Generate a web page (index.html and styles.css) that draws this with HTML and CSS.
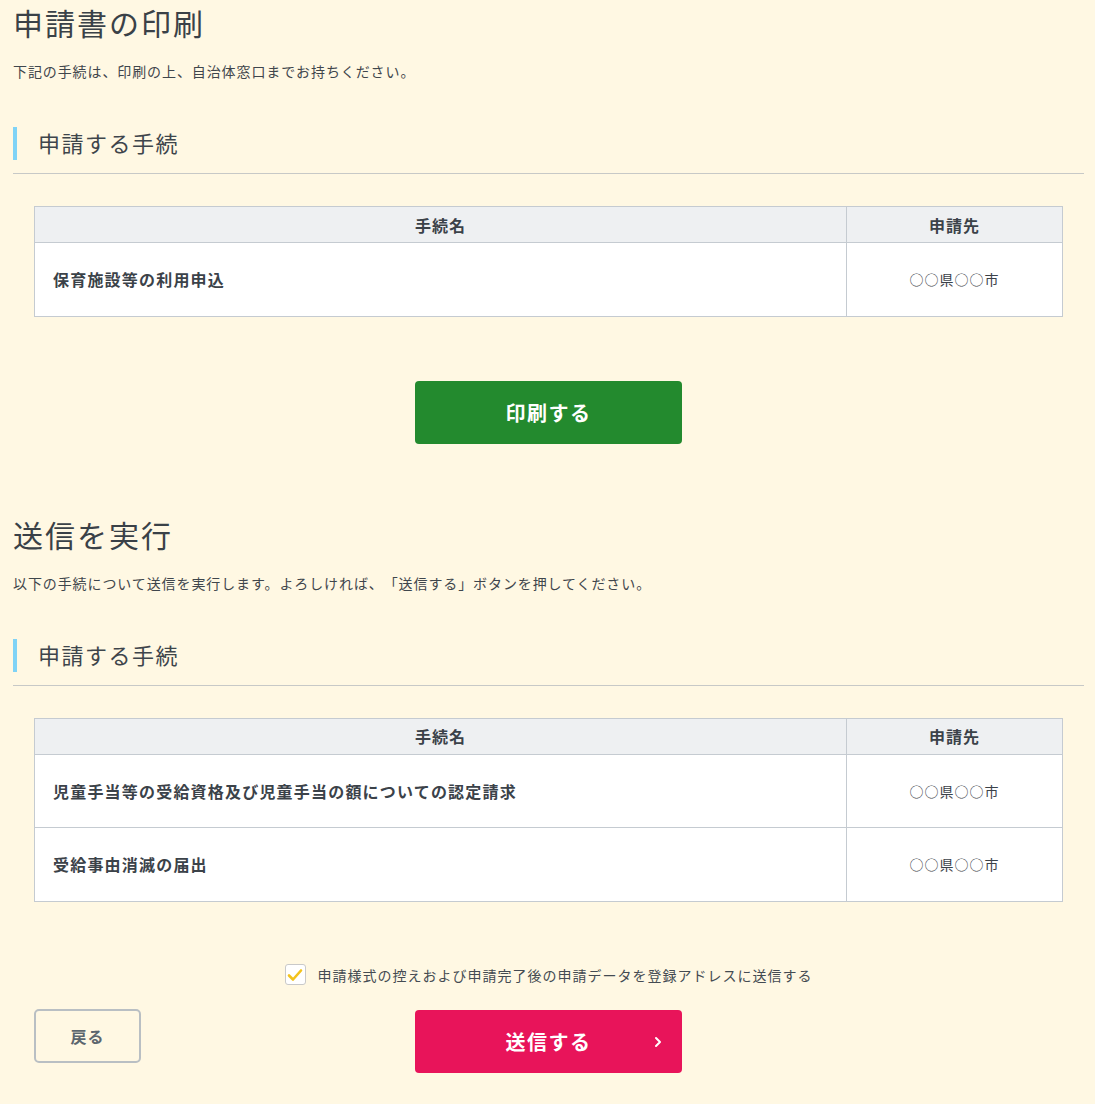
FILE: index.html
```html
<!DOCTYPE html>
<html lang="ja">
<head>
<meta charset="utf-8">
<title>申請書の印刷</title>
<link rel="stylesheet" href="styles.css">
</head>
<body>
<div class="page">
  <section class="block">
    <h1 class="title">申請書の印刷</h1>
    <p class="lead">下記の手続は、印刷の上、自治体窓口までお持ちください。</p>
    <div class="sec-head"><h2 class="sec-title">申請する手続</h2></div>
    <table class="proc">
      <thead>
        <tr><th class="c-name">手続名</th><th class="c-dest">申請先</th></tr>
      </thead>
      <tbody>
        <tr><td class="c-name">保育施設等の利用申込</td><td class="c-dest">○○県○○市</td></tr>
      </tbody>
    </table>
    <div class="center">
      <button class="btn btn-print" type="button">印刷する</button>
    </div>
  </section>

  <section class="block block2">
    <h1 class="title">送信を実行</h1>
    <p class="lead">以下の手続について送信を実行します。よろしければ、「送信する」ボタンを押してください。</p>
    <div class="sec-head"><h2 class="sec-title">申請する手続</h2></div>
    <table class="proc">
      <thead>
        <tr><th class="c-name">手続名</th><th class="c-dest">申請先</th></tr>
      </thead>
      <tbody>
        <tr><td class="c-name">児童手当等の受給資格及び児童手当の額についての認定請求</td><td class="c-dest">○○県○○市</td></tr>
        <tr><td class="c-name">受給事由消滅の届出</td><td class="c-dest">○○県○○市</td></tr>
      </tbody>
    </table>
    <label class="check">
      <span class="box"><svg width="16" height="14" viewBox="0 0 16 14"><polyline points="2,7.5 6,11.5 14,2.5" fill="none" stroke="#f3c31d" stroke-width="2.6" stroke-linecap="round" stroke-linejoin="round"/></svg></span>
      <span class="check-label">申請様式の控えおよび申請完了後の申請データを登録アドレスに送信する</span>
    </label>
    <div class="actions">
      <div class="act-left"><button class="btn-back" type="button">戻る</button></div>
      <button class="btn btn-send" type="button">送信する<svg class="chev" width="8" height="12" viewBox="0 0 8 12"><polyline points="2,2 6,6 2,10" fill="none" stroke="#fff" stroke-width="2" stroke-linecap="round" stroke-linejoin="round"/></svg></button>
      <div></div>
    </div>
  </section>
</div>
</body>
</html>
```
FILE: styles.css
```css
html, body {
  margin: 0;
  padding: 0;
  background: #fff8e3;
}
body {
  font-family: "Noto Sans CJK JP", "Noto Sans", sans-serif;
  color: #3b4249;
  text-spacing-trim: space-all;
}
.page {
  padding: 0 11px 0 13px;
}
.title {
  margin: 0;
  font-size: 30px;
  line-height: 45px;
  font-weight: 400;
  letter-spacing: 2px;
  color: #3a4147;
}
.lead {
  margin: 16px 0 0;
  font-size: 14px;
  line-height: 20px;
  letter-spacing: 0.9px;
  color: #3f464c;
}
.sec-head {
  margin-top: 46px;
  padding-bottom: 13px;
  border-bottom: 1px solid #c7c9c7;
}
.sec-title {
  margin: 0;
  border-left: 4px solid #7fd3f6;
  padding-left: 21px;
  font-size: 22px;
  line-height: 30px;
  height: 33px;
  font-weight: 400;
  letter-spacing: 1.5px;
  color: #3e454b;
}
.proc {
  margin: 32px 21px 0;
  width: calc(100% - 42px);
  border-collapse: collapse;
  background: #fff;
}
.proc th, .proc td {
  border: 1px solid #c5cbd1;
}
.proc th {
  background: #eef0f2;
  height: 35px;
  padding: 0;
  font-size: 16px;
  font-weight: 700;
  letter-spacing: 1px;
  color: #3b4249;
  text-align: center;
}
.proc td {
  height: 72.5px;
  padding: 0;
}
.proc td.c-name {
  padding-left: 18px;
  font-size: 16px;
  font-weight: 700;
  letter-spacing: 1.2px;
  color: #3b4249;
}
.proc .c-dest {
  width: 215px;
  text-align: center;
}
.proc td.c-dest {
  font-size: 14px;
  letter-spacing: 1px;
  color: #3b4249;
}
.center {
  display: flex;
  justify-content: center;
  margin-top: 64px;
}
.btn {
  font-family: inherit;
  border: 0;
  border-radius: 4px;
  width: 267px;
  height: 63px;
  color: #fff;
  font-size: 20px;
  font-weight: 700;
  letter-spacing: 1.5px;
  cursor: pointer;
}
.btn-print {
  background: #238a2e;
}
.block2 {
  margin-top: 68px;
}
.check {
  display: flex;
  align-items: center;
  justify-content: center;
  gap: 12px;
  margin-top: 62px;
}
.box {
  width: 19px;
  height: 19px;
  border: 1px solid #c9c9c9;
  border-radius: 3px;
  background: #fff;
  display: flex;
  align-items: center;
  justify-content: center;
}
.check-label {
  font-size: 14px;
  line-height: 22px;
  letter-spacing: 1px;
  color: #444b52;
}
.actions {
  display: grid;
  grid-template-columns: 1fr auto 1fr;
  margin-top: 24px;
  padding-bottom: 31px;
}
.act-left {
  padding-left: 21px;
}
.btn-back {
  font-family: inherit;
  width: 107px;
  height: 54px;
  margin-top: -1px;
  background: #fff8e3;
  border: 2px solid #b9bfc3;
  border-radius: 5px;
  font-size: 16px;
  font-weight: 700;
  letter-spacing: 1px;
  color: #5c666e;
}
.btn-send {
  background: #e8145a;
  position: relative;
}
.chev {
  position: absolute;
  right: 20px;
  top: 26px;
}
```
